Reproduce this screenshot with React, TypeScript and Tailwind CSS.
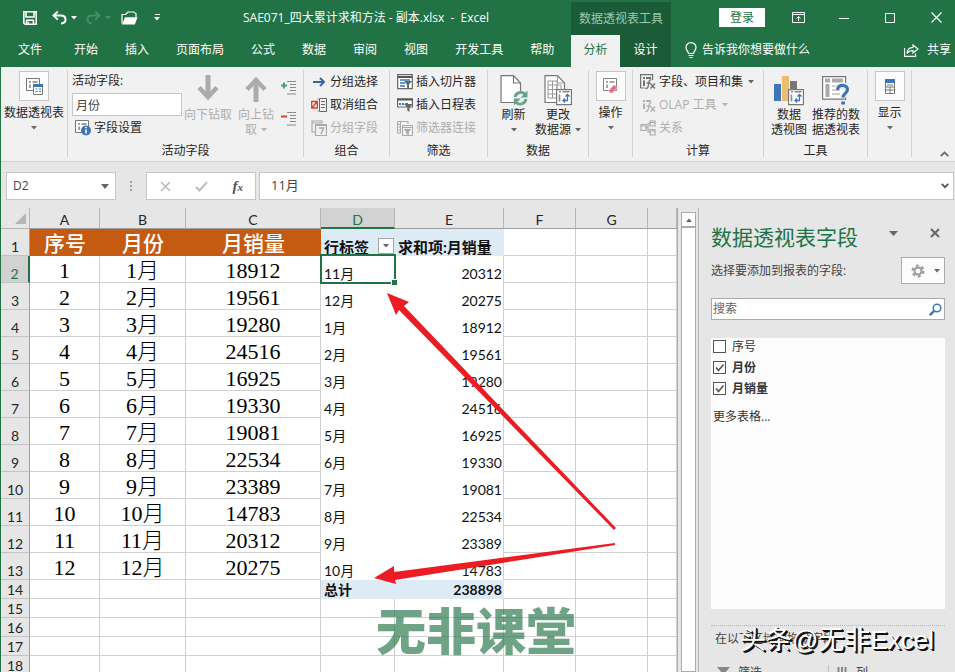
import React from "react";

type Kids = { children?: React.ReactNode };

const Caret = ({ className = "text-[#666]" }: { className?: string }) => (
  <svg width="6" height="4" viewBox="0 0 6 4" className={`shrink-0 ${className}`} aria-hidden="true">
    <path d="M0 0h6L3 3.6z" fill="currentColor" />
  </svg>
);

/* ---------- title bar ---------- */

const SaveIcon = () => (
  <svg width="14" height="14" viewBox="0 0 14 14" fill="none" stroke="white" strokeWidth="1.6" aria-hidden="true">
    <path d="M.8.8h12.4v12.4H2.2L.8 11.8z" />
    <path d="M3 1v5h8V1M3.6 13V9.2h6.8V13" />
    <path d="M5.4 13v-2.2" />
  </svg>
);

const UndoIcon = () => (
  <svg width="15" height="14" viewBox="0 0 15 14" fill="none" stroke="currentColor" strokeWidth="2" aria-hidden="true">
    <path d="M1.5 4.6h7.2c3 0 4.8 1.6 4.8 3.9 0 2.400-1.800 3.800-4.500 4" />
    <path d="M5.800.6L1.600 4.600l4.200 4" />
  </svg>
);

const OpenIcon = () => (
  <svg width="17" height="14" viewBox="0 0 17 14" aria-hidden="true">
    <path d="M1 12.500V3.500h3.500L7 1h5.500l2.500 1.500v3.500" fill="none" stroke="white" strokeWidth="1.200" />
    <path d="M1 13.500L4 6.200h12.500L13.800 13.500z" fill="white" />
  </svg>
);

function TitleBar() {
  const tabs = ["开始", "插入", "页面布局", "公式", "数据", "审阅", "视图", "开发工具", "帮助"];
  return (
    <header className="grid shrink-0 grid-cols-[570px_100px_1fr] grid-rows-[35px_32px] bg-[#217346] text-xs text-white">
      <div className="flex items-center">
        <div className="flex w-[242px] items-center pl-[22px]">
          <button aria-label="保存"><SaveIcon /></button>
          <button aria-label="撤消" className="ml-[15px] flex items-center gap-1">
            <UndoIcon /><Caret className="text-white" />
          </button>
          <button aria-label="恢复" className="ml-[9px] flex items-center gap-1 text-[#4a8c68]">
            <span className="-scale-x-100"><UndoIcon /></span><Caret className="text-[#4a8c68]" />
          </button>
          <button aria-label="打开" className="ml-[10px]"><OpenIcon /></button>
          <button aria-label="自定义快速访问工具栏" className="ml-4 flex flex-col items-center gap-[2px]">
            <span className="h-px w-[5px] bg-white" /><Caret className="text-white" />
          </button>
        </div>
        <h1 className="whitespace-pre">SAE071_四大累计求和方法 - 副本.xlsx  -  Excel</h1>
      </div>
      <div className="mt-[2px] flex items-center justify-center bg-[#1a5c38] text-[#9fc9ae]">数据透视表工具</div>
      <div className="flex items-center justify-end pr-[13px]">
        <button className="mr-[27px] h-[19px] w-[46px] bg-white text-[#217346]">登录</button>
        <button aria-label="功能区显示选项" className="mr-[34px]">
          <svg width="13" height="11" viewBox="0 0 13 11" fill="none" stroke="white" aria-hidden="true">
            <path d="M.5.5h12v10H.5zM.5 2.500h12M6.500 9V4.500M4.500 6.500l2-2 2 2" />
          </svg>
        </button>
        <button aria-label="最小化" className="mr-[36px]">
          <svg width="10" height="10" aria-hidden="true"><path d="M0 5.500h10" stroke="white" /></svg>
        </button>
        <button aria-label="最大化" className="mr-[36px]">
          <svg width="10" height="10" aria-hidden="true"><path d="M.5.5h9v9h-9z" fill="none" stroke="white" /></svg>
        </button>
        <button aria-label="关闭">
          <svg width="11" height="11" aria-hidden="true"><path d="M.5.5l10 10M10.500.5l-10 10" stroke="white" strokeWidth="1.200" /></svg>
        </button>
      </div>

      <nav className="flex items-center gap-[27px] pb-[2px] pl-[17px]">
        <button className="mr-[5px]">文件</button>
        {tabs.map((t) => <button key={t}>{t}</button>)}
      </nav>
      <div className="flex bg-[#1a5c38]">
        <button className="w-[49px] bg-[#f1f1f1] pb-[2px] text-[#217346]">分析</button>
        <button className="flex-1 pb-[2px]">设计</button>
      </div>
      <div className="flex items-center justify-between pb-[2px] pr-1 pl-[14px]">
        <button className="flex items-center gap-[5px]">
          <svg width="12" height="17" viewBox="0 0 12 17" fill="none" stroke="white" strokeWidth="1.200" aria-hidden="true">
            <path d="M3.500 11.500C3.500 9.500 1 8.500 1 5.500a5 4.900 0 0 1 10 0c0 3-2.500 4-2.500 6zM3.500 13.500h5M4.500 15.500h3" />
          </svg>
          告诉我你想要做什么
        </button>
        <button className="flex items-center gap-2">
          <svg width="15" height="13" viewBox="0 0 15 13" fill="none" stroke="white" strokeWidth="1.100" aria-hidden="true">
            <path d="M.6 4v8.400h11V9.500M9 1l5 4-5 4V6.500C6.500 6.500 4.500 7.200 3 9.500 3.300 6 5.500 3.600 9 3.400z" />
          </svg>
          共享
        </button>
      </div>
    </header>
  );
}

/* ---------- ribbon ---------- */

function Group({ label, className, children }: Kids & { label?: string; className: string }) {
  return (
    <section className={`flex h-[87px] shrink-0 flex-col border-r border-[#d2d2d2] ${className}`}>
      <div className="flex h-[72px] shrink-0">{children}</div>
      <div className="text-center leading-[17px]">{label}</div>
    </section>
  );
}

function FramedButton({ label, children }: Kids & { label: string }) {
  return (
    <button className="flex w-full flex-col items-center pt-px leading-[15px] whitespace-nowrap">
      <span className="mb-1 flex size-[30px] items-center justify-center border border-[#c6c6c6] bg-[#fcfcfc]">{children}</span>
      {label}
      <span className="mt-[6px]"><Caret /></span>
    </button>
  );
}

function BigButton({ lines, caret, disabled, className, children }: Kids & { lines: string[]; caret?: boolean; disabled?: boolean; className: string }) {
  return (
    <button disabled={disabled} className={`flex shrink-0 flex-col items-center pt-[5px] leading-[15px] whitespace-nowrap disabled:text-[#aeaeae] ${className}`}>
      <span className="flex h-8 items-start">{children}</span>
      {lines.map((l, i) => (
        <span key={i} className="flex h-[15px] items-center gap-1">
          {l}
          {caret && i === lines.length - 1 && <Caret className={disabled ? "text-[#b5b5b5]" : "text-[#666]"} />}
        </span>
      ))}
    </button>
  );
}

function RowButton({ icon, label, disabled, caret }: { icon: React.ReactNode; label: string; disabled?: boolean; caret?: boolean }) {
  return (
    <button disabled={disabled} className="flex h-[23px] items-center gap-[3px] whitespace-nowrap disabled:text-[#aeaeae]">
      <span className="flex w-4 shrink-0 justify-center">{icon}</span>
      {label}
      {caret && <span className="ml-[2px]"><Caret className={disabled ? "text-[#b5b5b5]" : "text-[#666]"} /></span>}
    </button>
  );
}

const TableGlyph = ({ c = "#777" }: { c?: string }) => (
  <>
    <path d="M.5.5h13v12H.5z" fill="white" stroke={c} />
    <path d="M3 3h2v2H3zM6.500 3h5v2h-5zM3 6.500h2V10H3z" fill={c} opacity=".7" />
  </>
);

const PivotTableIcon = () => (
  <svg width="17" height="17" viewBox="0 0 17 17" aria-hidden="true">
    <TableGlyph />
    <path d="M7.500 6.500h9v10h-9z" fill="white" stroke="#777" />
    <path d="M7 6h10v3H7z" fill="#3e76b5" />
    <path d="M9.500 11h2M13 11h2M9.500 13.500h2M13 13.500h2" stroke="#3e76b5" strokeWidth="1.200" />
  </svg>
);

const FieldSettingsIcon = () => (
  <svg width="16" height="16" viewBox="0 0 16 16" aria-hidden="true">
    <TableGlyph />
    <circle cx="11" cy="10.500" r="5" fill="#3e76b5" />
    <path d="M11 9.500v4M11 6.700v1.600" stroke="white" strokeWidth="1.600" />
  </svg>
);

const DrillArrow = ({ up }: { up?: boolean }) => (
  <svg width="22" height="27" viewBox="0 0 22 27" fill="none" stroke="#ababab" strokeWidth="5" className={up ? "rotate-180" : ""} aria-hidden="true">
    <path d="M11 0v23" /><path d="M2 12.500l9 9.500 9-9.500" strokeWidth="4.500" />
  </svg>
);

const LevelIcon = ({ plus }: { plus?: boolean }) => (
  <svg width="15" height="14" viewBox="0 0 15 14" aria-hidden="true">
    <path d="M6 .5h9M9 3.500h6M9 6.500h6M9 9.500h6M6 13h9" stroke="#8a8a8a" />
    {plus ? <path d="M0 4.500h6M3 1.500v6" stroke="#4f9b75" strokeWidth="2" /> : <path d="M0 4.500h6" stroke="#d8432e" strokeWidth="2" />}
  </svg>
);

const GroupArrowIcon = () => (
  <svg width="13" height="10" viewBox="0 0 13 10" fill="none" stroke="#3468a5" strokeWidth="2" aria-hidden="true">
    <path d="M0 5h11M7 1l4 4-4 4" />
  </svg>
);

const UngroupIcon = () => (
  <svg width="16" height="14" viewBox="0 0 16 14" fill="none" aria-hidden="true">
    <path d="M.7 3.500h5.600v6.500H.7zM1 10l5-6.500" stroke="#d8432e" strokeWidth="1.300" />
    <path d="M8.500.5h7v13h-7zM10 3.500h4M10 6.500h4M10 9.500h4M7 .5v1M7 12.500v1" stroke="#666" />
  </svg>
);

const GroupFieldIcon = () => (
  <svg width="16" height="16" viewBox="0 0 16 16" fill="none" stroke="#aaa" strokeWidth="1.200" aria-hidden="true">
    <path d="M4 12H1V1h10v2M1 3h10" /><path d="M4.500 4.500h11v11h-11zM4.500 5.500h11" /><path d="M8 8h4.500l-2.500 6" strokeWidth="1.500" />
  </svg>
);

const SlicerIcon = () => (
  <svg width="16" height="16" viewBox="0 0 16 16" aria-hidden="true">
    <path d="M.7.7h14.600v14H.7z" fill="white" stroke="#666" strokeWidth="1.200" />
    <path d="M1 3h14" stroke="#555" strokeWidth="2" />
    <path d="M3 6h10M3 9h5M3 12h5" stroke="#3e76b5" strokeWidth="1.500" />
    <path d="M7 7h8l-3 3.500V15l-2-1.500v-3z" fill="#666" />
  </svg>
);

const TimelineIcon = () => (
  <svg width="16" height="14" viewBox="0 0 16 14" aria-hidden="true">
    <path d="M.6 1h14.800v8H.6z" fill="white" stroke="#666" strokeWidth="1.200" />
    <path d="M0 1.500h16" stroke="#555" strokeWidth="2" />
    <path d="M2 6h2M5 6h2M8 6h3" stroke="#3e76b5" strokeWidth="2" />
    <path d="M7 6h8.500l-3 3.500V14l-2.200-1.500v-3z" fill="#666" />
  </svg>
);

const FilterLinkIcon = () => (
  <svg width="16" height="16" viewBox="0 0 16 16" fill="none" stroke="#aaa" aria-hidden="true">
    <path d="M4 13H.5V1.500H11V4M.5 4.500H4M3.500 1.500V13M1.500 7h2M1.500 10h2" /><path d="M5.500 5.500h10v10h-10zM5.500 7.500h10" />
    <path d="M7.500 9.500h6l-2.200 2.500v2.500l-1.500-1V12z" fill="#aaa" />
  </svg>
);

const RefreshIcon = () => (
  <svg width="28" height="31" viewBox="0 0 28 31" aria-hidden="true">
    <path d="M1 .6h12.500L20.500 8v19.500H1z" fill="white" stroke="#777" strokeWidth="1.200" />
    <path d="M13.500.6V8h7" fill="none" stroke="#777" strokeWidth="1.200" />
    <circle cx="20.500" cy="23" r="7" fill="#f1f1f1" />
    <path d="M15 22a6 6 0 0 1 10-3M26 24a6 6 0 0 1-10 3.500" fill="none" stroke="#62a587" strokeWidth="2.800" />
    <path d="M27.500 15.500v7h-7zM13.800 30.500v-7h7z" fill="#62a587" />
  </svg>
);

const PivotCorner = () => (
  <>
    <path d="M.6.6h14.800v15H.6z" fill="white" stroke="#777" strokeWidth="1.200" />
    <path d="M3 2.700h2M6.500 2.700h7M3.500 5.500v7" stroke="#8a8a8a" strokeWidth="1.600" />
    <path d="M11.500 6v5.500H7M9.500 7.500l2-2 2 2M9 9.500l-2 2 2 2" fill="none" stroke="#3e76b5" strokeWidth="1.300" />
  </>
);

const ChangeSourceIcon = () => (
  <svg width="28" height="31" viewBox="0 0 28 31" aria-hidden="true">
    <path d="M1 .6h12.500L20.500 8v19.500H1z" fill="white" stroke="#777" strokeWidth="1.200" />
    <path d="M13.500.6V8h7M4 6h9v17H4zM4 10h13v13M4 14.500h13M4 19h13M8.500 6v17M13 10v13" fill="none" stroke="#999" />
    <g transform="translate(12 14)"><PivotCorner /></g>
  </svg>
);

const ActionIcon = () => (
  <svg width="15" height="16" viewBox="0 0 15 16" aria-hidden="true">
    <TableGlyph c="#808080" />
    <path d="M5.500 12.500L11 6.500l3.500 3-5 5.500H7z" fill="#ea6f86" stroke="white" strokeWidth=".5" />
  </svg>
);

const FxTableIcon = ({ c, solid }: { c: string; solid?: boolean }) => (
  <svg width="16" height="16" viewBox="0 0 16 16" aria-hidden="true">
    <path d="M.6 14V.6h12V6M.6 14h4" fill="none" stroke={c} strokeWidth={solid ? 0 : 1.200} />
    <path d="M3 3h2v2H3zM6 3h5v2H6zM3 6.500h2V12H3z" fill={c} />
    <path d="M11.500 6c-2-.8-2.500 1-2.800 3.500S8 15 5.500 14.500M6.500 9h4M10.500 9.500l4.500 5M15 9.500l-4.500 5" fill="none" stroke={c} strokeWidth="1.300" />
  </svg>
);

const RelationIcon = () => (
  <svg width="16" height="16" viewBox="0 0 16 16" fill="none" stroke="#aaa" strokeWidth="1.200" aria-hidden="true">
    <path d="M1 4.500h5v6H1zM10 1h5v5h-5zM10 9.500h5v5.500h-5zM6 7.500h2V3.500h2M8 7.500v4.500h2M1 6h5M10 2.500h5M10 11h5" />
  </svg>
);

const PivotChartIcon = () => (
  <svg width="31" height="31" viewBox="0 0 31 31" aria-hidden="true">
    <path d="M0 9h7v17H0z" fill="#3e76b5" /><path d="M8 1h7v25H8z" fill="#e9bd72" /><path d="M16 6h7v12h-7z" fill="#777" />
    <g transform="translate(14 14)"><PivotCorner /></g>
  </svg>
);

const RecommendIcon = () => (
  <svg width="28" height="31" viewBox="0 0 28 31" fill="none" aria-hidden="true">
    <path d="M.6 1.600h23v22.500H.6z" fill="white" stroke="#777" strokeWidth="1.200" />
    <path d="M3 5.500h5M10 5.500h11M5.500 9v13" stroke="#aaa" strokeWidth="4" />
    <path d="M10 11h11M10 15h8M10 19h8" stroke="#999" strokeWidth="1.200" />
    <path d="M15.500 15c.3-3.500 2.500-4.700 5-4.700 3 0 5 1.700 5 4.300 0 3.800-4.500 3.900-4.500 8M19 28h4" stroke="#f1f1f1" strokeWidth="6" />
    <path d="M15.500 15c.3-3.500 2.500-4.700 5-4.700 3 0 5 1.700 5 4.300 0 3.800-4.500 3.900-4.500 8M19.200 28h3.800" stroke="#3e76b5" strokeWidth="3.200" />
  </svg>
);

const ShowIcon = () => (
  <svg width="10" height="15" viewBox="0 0 10 15" aria-hidden="true">
    <path d="M.5.5h9v14h-9zM.5 8h9M.5 11h9M5 8v6.500" fill="white" stroke="#777" />
    <path d="M0 0h10v4H0z" fill="#3e76b5" /><path d="M2 6h6" stroke="#777" />
  </svg>
);

function Ribbon() {
  return (
    <div className="flex shrink-0 border-b border-[#d0d0d0] bg-[#f1f1f1] pt-[3px] pb-1 text-xs text-[#262626]">
      <Group className="w-[67px]">
        <FramedButton label="数据透视表"><PivotTableIcon /></FramedButton>
      </Group>
      <Group className="w-[236px]" label="活动字段">
        <div className="flex w-[114px] flex-col pl-1">
          <label htmlFor="active-field" className="h-[23px] leading-[22px]">活动字段:</label>
          <input id="active-field" defaultValue="月份" className="h-[23px] w-full border border-[#c6c6c6] bg-white px-[3px] text-[#444]" />
          <div className="pl-[3px]"><RowButton icon={<FieldSettingsIcon />} label="字段设置" /></div>
        </div>
        <BigButton className="w-[52px]" lines={["向下钻取"]} disabled><DrillArrow /></BigButton>
        <BigButton className="w-[44px]" lines={["向上钻", "取"]} caret disabled><DrillArrow up /></BigButton>
        <div className="flex flex-col gap-[17px] pt-[11px] pl-[3px]">
          <button aria-label="展开字段"><LevelIcon plus /></button>
          <button aria-label="折叠字段"><LevelIcon /></button>
        </div>
      </Group>
      <Group className="w-[86px]" label="组合">
        <div className="pl-[7px]">
          <RowButton icon={<GroupArrowIcon />} label="分组选择" />
          <RowButton icon={<UngroupIcon />} label="取消组合" />
          <RowButton icon={<GroupFieldIcon />} label="分组字段" disabled />
        </div>
      </Group>
      <Group className="w-[98px]" label="筛选">
        <div className="pl-[7px]">
          <RowButton icon={<SlicerIcon />} label="插入切片器" />
          <RowButton icon={<TimelineIcon />} label="插入日程表" />
          <RowButton icon={<FilterLinkIcon />} label="筛选器连接" disabled />
        </div>
      </Group>
      <Group className="w-[101px]" label="数据">
        <BigButton className="w-[47px] pl-1" lines={["刷新", ""]} caret><RefreshIcon /></BigButton>
        <BigButton className="w-[46px]" lines={["更改", "数据源"]} caret><ChangeSourceIcon /></BigButton>
      </Group>
      <Group className="w-[44px]">
        <FramedButton label="操作"><ActionIcon /></FramedButton>
      </Group>
      <Group className="w-[131px]" label="计算">
        <div className="pl-[7px]">
          <RowButton icon={<FxTableIcon c="#707070" />} label="字段、项目和集" caret />
          <RowButton icon={<FxTableIcon c="#b0b0b0" solid />} label="OLAP 工具" caret disabled />
          <RowButton icon={<RelationIcon />} label="关系" disabled />
        </div>
      </Group>
      <Group className="w-[104px]" label="工具">
        <BigButton className="w-[50px]" lines={["数据", "透视图"]}><PivotChartIcon /></BigButton>
        <BigButton className="w-[44px]" lines={["推荐的数", "据透视表"]}><RecommendIcon /></BigButton>
      </Group>
      <Group className="w-[44px]">
        <FramedButton label="显示"><ShowIcon /></FramedButton>
      </Group>
      <div className="flex flex-1 items-end justify-end pr-[6px]">
        <button aria-label="折叠功能区">
          <svg width="9" height="6" viewBox="0 0 9 6" fill="none" stroke="#666" strokeWidth="1.800" aria-hidden="true"><path d="M.7 5.200L4.500 1.400l3.800 3.800" /></svg>
        </button>
      </div>
    </div>
  );
}

/* ---------- formula bar ---------- */

function FormulaBar() {
  return (
    <div className="flex h-[46px] shrink-0 items-center pt-[2px] pr-px pl-[5px] text-[#444]">
      <div className="flex h-7 w-[110px] items-center border border-[#c6c6c6] bg-white pr-[6px]">
        <input aria-label="名称框" defaultValue="D2" className="w-full min-w-0 flex-1 pl-[6px] text-xs" />
        <button aria-label="名称列表"><svg width="8" height="5" aria-hidden="true"><path d="M0 0h8L4 5z" fill="#666" /></svg></button>
      </div>
      <div className="flex w-[30px] flex-col items-center gap-[2px]">
        <i className="size-[2px] bg-[#a0a0a0]" /><i className="size-[2px] bg-[#a0a0a0]" /><i className="size-[2px] bg-[#a0a0a0]" />
      </div>
      <div className="flex h-7 w-[110px] items-center justify-between border border-[#c6c6c6] bg-white pr-3 pl-[13px]">
        <button aria-label="取消"><svg width="11" height="11" aria-hidden="true"><path d="M1 1l9 9M10 1l-9 9" stroke="#bdbdbd" strokeWidth="1.600" /></svg></button>
        <button aria-label="输入"><svg width="13" height="11" aria-hidden="true"><path d="M1 6l3.500 3.500L12 1" fill="none" stroke="#bdbdbd" strokeWidth="2" /></svg></button>
        <button aria-label="插入函数" className="font-['Liberation_Serif',serif] text-[15px] font-bold text-[#555] italic">f<span className="text-[11px]">x</span></button>
      </div>
      <div className="ml-[3px] flex h-7 flex-1 items-center border border-[#c6c6c6] bg-white pr-1">
        <input aria-label="编辑栏" defaultValue="11月" className="min-w-0 flex-1 pl-[11px] text-[13px]" />
        <button aria-label="展开编辑栏"><svg width="8" height="6" aria-hidden="true"><path d="M.7.8L4 4.200 7.300.8" fill="none" stroke="#555" strokeWidth="1.800" /></svg></button>
      </div>
    </div>
  );
}

/* ---------- worksheet ---------- */

const sales: [number, number][] = [
  [1, 18912], [2, 19561], [3, 19280], [4, 24516], [5, 16925], [6, 19330],
  [7, 19081], [8, 22534], [9, 23389], [10, 14783], [11, 20312], [12, 20275],
];
const pivotOrder = [11, 12, 1, 2, 3, 4, 5, 6, 7, 8, 9, 10];

const line = "border-r border-b border-[#d0d0d0]";
const rowHead = "border-r border-b border-r-[#9f9f9f] border-b-[#c4c4c4] text-center align-bottom font-normal text-sm leading-4";
const serif = "pt-1 text-center align-middle font-['Liberation_Serif','Noto_Sans_CJK_SC',serif] font-light text-[22px] leading-[22px] text-black";
const orange = "bg-[#c55a11] text-center align-middle font-['Noto_Sans_CJK_SC',sans-serif] text-[21px] leading-[24px] pb-[2px] font-medium text-white";
const pivot = "align-bottom font-['Lato','Noto_Sans_CJK_SC',sans-serif] text-sm leading-[18px] text-[#111]";

function Sheet() {
  const letters = ["A", "B", "C", "D", "E", "F", "G", ""];
  const blanks = (n: number) => Array.from({ length: n }, (_, i) => <td key={`b${i}`} className={line} />);
  return (
    <div className="relative min-w-0 flex-1 overflow-hidden">
      <table className="w-full table-fixed border-separate border-spacing-0 bg-white font-['Lato','Noto_Sans_CJK_SC',sans-serif]">
        <colgroup>
          <col className="w-[29px]" /><col className="w-[70px]" /><col className="w-[86px]" /><col className="w-[135px]" />
          <col className="w-[74px]" /><col className="w-[109px]" /><col className="w-[72px]" /><col className="w-[72px]" /><col />
        </colgroup>
        <thead>
          <tr className="h-[21px] bg-[#e6e6e6] text-sm leading-4 text-[#262626]">
            <th className="border-r border-b border-[#b5b5b5] p-0 align-bottom">
              <svg width="11" height="11" className="mb-1 ml-[14px]" aria-hidden="true"><path d="M11 0v11H0z" fill="#b5b5b5" /></svg>
            </th>
            {letters.map((l, i) => (
              <th key={i} className={l === "D"
                ? "border-r border-b-2 border-r-[#b5b5b5] border-b-[#217346] bg-[#d2d2d2] p-0 align-bottom font-normal leading-[15px] text-[#217346]"
                : "border-r border-b border-r-[#b5b5b5] border-b-[#9f9f9f] p-0 align-bottom font-normal"}>{l}</th>
            ))}
          </tr>
        </thead>
        <tbody>
          <tr className="h-[27px]">
            <th className={`${rowHead} bg-[#e6e6e6] text-[#262626]`}>1</th>
            <td className={orange}>序号</td><td className={orange}>月份</td><td className={orange}>月销量</td>
            <td className={`${pivot} bg-[#ddebf7] p-0 pl-[3px] font-bold whitespace-nowrap`}>
              <div className="flex items-end justify-between pr-px text-[15px]">
                行标签
                <button aria-label="筛选行标签" className="mb-[2px] flex size-4 items-center justify-center border border-[#a6a6a6] bg-white"><Caret /></button>
              </div>
            </td>
            <td className={`${pivot} bg-[#ddebf7] pl-[3px] text-[15px] font-bold whitespace-nowrap`}>求和项:月销量</td>
            {blanks(3)}
          </tr>
          {sales.map(([m, v], i) => {
            const pm = pivotOrder[i];
            return (
              <tr key={m} className="h-[27px]">
                <th className={`${rowHead} ${i === 0 ? "border-r-2 border-r-[#217346] bg-[#d2d2d2] text-[#217346]" : "bg-[#e6e6e6] text-[#262626]"}`}>{m + 1}</th>
                <td className={`${line} ${serif}`}>{m}</td>
                <td className={`${line} ${serif}`}>{m}月</td>
                <td className={`${line} ${serif}`}>{v}</td>
                <td className={`${pivot} relative pl-[3px]`}>
                  {pm}月
                  {i === 0 && (
                    <span className="absolute -inset-x-px -top-[2px] -bottom-px border-2 border-[#217346]">
                      <span className="absolute -right-[3px] -bottom-[3px] size-[6px] border-t border-l border-white bg-[#217346]" />
                    </span>
                  )}
                </td>
                <td className={`${pivot} border-r border-[#d0d0d0] pr-px text-right`}>{sales[pm - 1][1]}</td>
                {blanks(3)}
              </tr>
            );
          })}
          <tr className="h-[19px]">
            <th className={`${rowHead} bg-[#e6e6e6] text-[#262626]`}>14</th>
            {blanks(3)}
            <td className={`${pivot} bg-[#ddebf7] pl-[3px] font-bold`}>总计</td>
            <td className={`${pivot} bg-[#ddebf7] pr-[2px] text-right font-bold`}>238898</td>
            {blanks(3)}
          </tr>
          {[15, 16, 17, 18].map((n) => (
            <tr key={n} className="h-[19px]">
              <th className={`${rowHead} bg-[#e6e6e6] text-[#262626]`}>{n}</th>
              {blanks(8)}
            </tr>
          ))}
        </tbody>
      </table>

      <div className="absolute top-[390px] left-[375px] font-['Noto_Sans_CJK_SC',sans-serif] text-[50px] leading-[60px] font-black whitespace-nowrap text-[#217346] opacity-65">无非课堂</div>

      <svg className="absolute top-0 left-0" width="676" height="464" viewBox="1 208 676 464" fill="#ec1c24" aria-hidden="true">
        <path d="M387 293L409 302L404 306L616 528L614 530L399 310L396 315z" />
        <path d="M374 578L394 566L394 572L615 543V545L395 580L396 584z" />
      </svg>
    </div>
  );
}

function ScrollBar() {
  return (
    <div className="flex w-[21px] shrink-0 flex-col border-l border-[#ababab] px-[3px] pt-1">
      <button aria-label="向上滚动" className="flex h-[15px] w-[15px] shrink-0 items-center justify-center border border-[#ababab] bg-white">
        <span className="rotate-180"><Caret /></span>
      </button>
      <div className="w-[15px] flex-1 border border-[#ababab] bg-white" />
    </div>
  );
}

/* ---------- field list pane ---------- */

function Field({ name, checked }: { name: string; checked?: boolean }) {
  return (
    <label className={`mb-1 flex h-[17px] items-center gap-[6px] ${checked ? "font-bold" : ""}`}>
      <span className="grid">
        <input type="checkbox" defaultChecked={checked} className="peer col-start-1 row-start-1 size-[13px] appearance-none border border-[#555] bg-white" />
        <svg width="13" height="13" className="pointer-events-none col-start-1 row-start-1 opacity-0 peer-checked:opacity-100" aria-hidden="true">
          <path d="M3 6.500L5.500 9.500 10.500 3.500" fill="none" stroke="#555" strokeWidth="1.600" />
        </svg>
      </span>
      {name}
    </label>
  );
}

function FieldPane() {
  return (
    <aside className="relative flex w-[257px] shrink-0 flex-col border-l border-[#b5b5b5] pr-[10px] pl-3 text-xs text-[#444]">
      <div className="flex shrink-0 items-center pt-[13px]">
        <h2 className="flex-1 text-[21px] leading-8 text-[#217346]">数据透视表字段</h2>
        <button aria-label="任务窗格选项" className="mr-8 mb-2"><svg width="9" height="5" aria-hidden="true"><path d="M0 0h9L4.500 5z" fill="#666" /></svg></button>
        <button aria-label="关闭窗格" className="mr-[5px] mb-2"><svg width="10" height="10" aria-hidden="true"><path d="M1 1l8 8M9 1L1 9" stroke="#666" strokeWidth="2" /></svg></button>
      </div>
      <div className="mt-1 flex shrink-0 items-center justify-between">
        <span>选择要添加到报表的字段:</span>
        <button aria-label="工具" className="flex h-[27px] w-[44px] items-center justify-between border border-[#ababab] bg-[#fcfcfc] pr-1 pl-[9px]">
          <svg width="14" height="14" viewBox="0 0 14 14" fill="none" stroke="#999" aria-hidden="true">
            <circle cx="7" cy="7" r="3.500" strokeWidth="2" />
            <circle cx="7" cy="7" r="5.500" strokeWidth="2" strokeDasharray="2.900 2.860" />
          </svg>
          <Caret />
        </button>
      </div>
      <div className="mt-[14px] flex h-[22px] shrink-0 items-center border border-[#ababab] bg-white pr-[2px]">
        <input aria-label="搜索" placeholder="搜索" className="min-w-0 flex-1 pl-px placeholder:text-[#666]" />
        <button aria-label="搜索字段">
          <svg width="13" height="13" viewBox="0 0 13 13" fill="none" stroke="#3e76b5" aria-hidden="true">
            <circle cx="8" cy="5" r="3.800" strokeWidth="1.500" /><path d="M5.200 7.800L.8 12.200" strokeWidth="2.400" />
          </svg>
        </button>
      </div>
      <div className="mt-[18px] flex h-[271px] shrink-0 flex-col items-start bg-[#fcfcfc] pl-[2px] text-[#333]">
        <Field name="序号" /><Field name="月份" checked /><Field name="月销量" checked />
        <button className="mt-2">更多表格...</button>
      </div>
      <div className="mt-4 shrink-0 border-t border-dotted border-[#b5b5b5]" />
      <p className="mt-1 shrink-0 pl-1 leading-[18px]">在以下区域间拖动字段:</p>
      <div className="mt-[17px] flex shrink-0 leading-4">
        <div className="flex w-[118px] items-start gap-2 border-r border-[#c0c0c0] pl-[6px]">
          <svg width="13" height="12" className="mt-[2px]" aria-hidden="true"><path d="M0 0h13L8 6v6L5 9V6z" fill="#888" /></svg>筛选
        </div>
        <div className="flex items-start gap-[9px] pl-2">
          <svg width="10" height="12" className="mt-[2px]" aria-hidden="true"><path d="M1.500 0v12M5 0v12M8.500 0v12" stroke="#888" strokeWidth="2" /></svg>列
        </div>
      </div>
      <div className="absolute top-[414px] left-[41px] font-['Liberation_Sans','Noto_Sans_CJK_SC',sans-serif] text-[26px] leading-9 whitespace-nowrap text-white [text-shadow:2px_2px_0_#111,1px_1px_0_#111]">头条@无非Excel</div>
    </aside>
  );
}

export default function App() {
  return (
    <div className="flex h-screen flex-col overflow-hidden border-l border-[#217346] bg-[#e6e6e6] font-['Open_Sans','Noto_Sans_CJK_SC',sans-serif]">
      <TitleBar />
      <Ribbon />
      <FormulaBar />
      <main className="flex min-h-0 flex-1 overflow-hidden">
        <Sheet />
        <ScrollBar />
        <FieldPane />
      </main>
    </div>
  );
}
